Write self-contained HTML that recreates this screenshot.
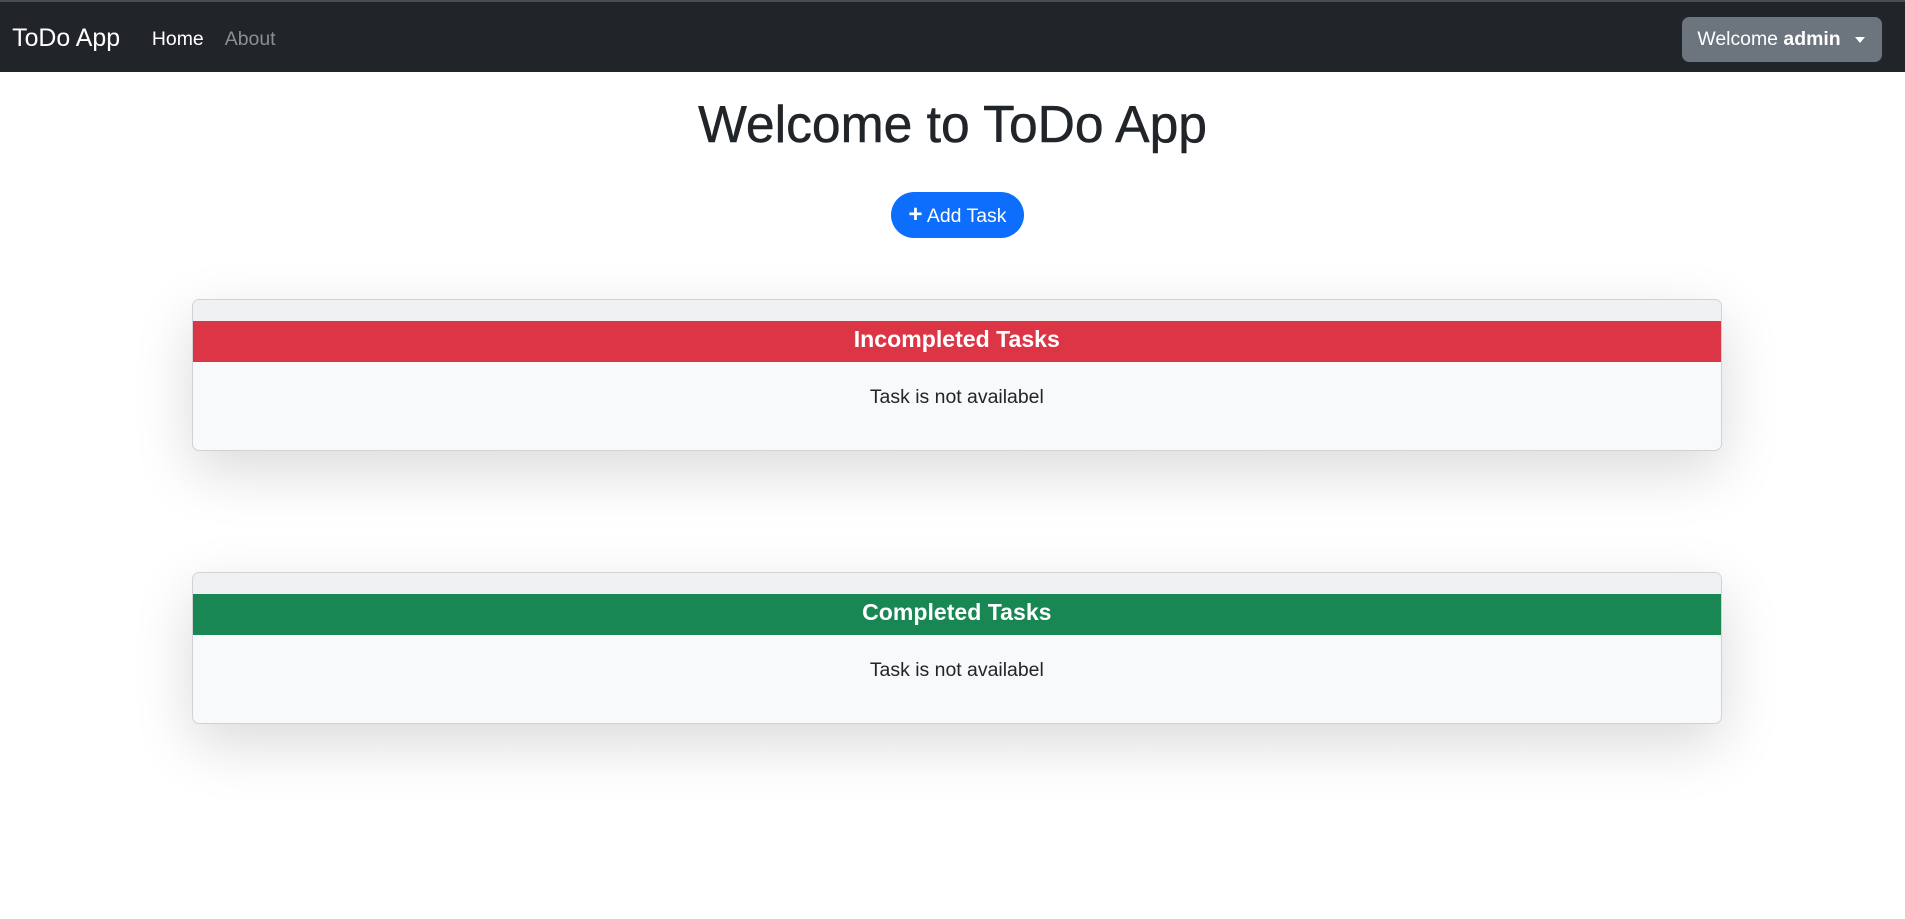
<!DOCTYPE html>
<html><head><meta charset="utf-8"><style>
html,body{margin:0;padding:0;}
body{width:1568px;height:756px;zoom:1.215;background:#fff;font-family:"Liberation Sans","DejaVu Sans",sans-serif;color:#212529;position:relative;overflow:hidden;}
.nav{position:absolute;left:0;top:0;width:1568px;height:59px;background:#212529;border-top:2px solid #4a4d52;box-sizing:border-box;}
.brand{position:absolute;left:10px;top:18px;font-size:20.5px;color:#fff;}
.link{position:absolute;top:21px;font-size:16px;}
.dd{position:absolute;left:1384px;top:12px;width:165px;height:37px;background:#6c757d;border-radius:6px;color:#fff;font-size:16px;line-height:37px;box-sizing:border-box;padding-left:13px;}
.dd .c{position:absolute;right:14px;top:17px;width:0;height:0;border-left:4.5px solid transparent;border-right:4.5px solid transparent;border-top:5px solid #fff;}
h1{position:absolute;left:0;width:1568px;top:78px;margin:0;text-align:center;font-size:42.5px;font-weight:500;line-height:48px;-webkit-text-stroke:0.4px #212529;}
.add{position:absolute;left:733px;top:158px;width:110px;height:38px;border-radius:19px;background:#0d6efd;color:#fff;font-size:16px;line-height:38px;text-align:center;}
.card{position:absolute;left:158px;width:1259px;height:125px;border:1px solid #d0d2d4;border-radius:6px;box-sizing:border-box;background:#f8f9fa;box-shadow:0 16px 48px rgba(0,0,0,0.15);overflow:hidden;}
.card .top{height:17px;background:#f0f1f2;}
.card .band{height:34px;color:#fff;font-size:19px;font-weight:bold;text-align:center;line-height:30px;}
.card .body{text-align:center;font-size:16px;padding-top:20px;}
</style></head><body>
<div class="nav">
<div class="brand">ToDo App</div>
<div class="link" style="left:125px;color:#fff">Home</div>
<div class="link" style="left:185px;color:#8c8f93">About</div>
<div class="dd">Welcome <b>admin</b><span class="c"></span></div>
</div>
<h1>Welcome to ToDo App</h1>
<div class="add"><b style="font-size:20px">+</b> Add Task</div>
<div class="card" style="top:246px"><div class="top"></div><div class="band" style="background:#dc3545">Incompleted Tasks</div><div class="body">Task is not availabel</div></div>
<div class="card" style="top:471px"><div class="top"></div><div class="band" style="background:#198754">Completed Tasks</div><div class="body">Task is not availabel</div></div>
</body></html>
